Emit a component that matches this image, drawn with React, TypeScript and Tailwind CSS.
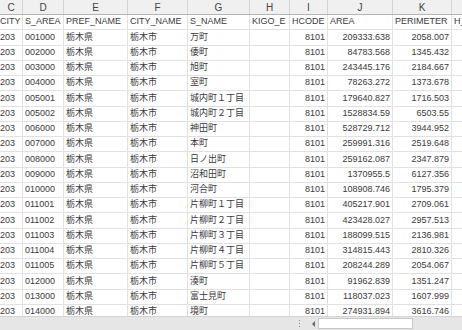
import React from "react";

const letters = ["C", "D", "E", "F", "G", "H", "I", "J", "K", ""];
const fields = ["CITY", "S_AREA", "PREF_NAME", "CITY_NAME", "S_NAME", "KIGO_E", "HCODE", "AREA", "PERIMETER", "H_ID"];

const rows: [string, string, string, string][] = [
  ["001000", "万町", "209333.638", "2058.007"],
  ["002000", "倭町", "84783.568", "1345.432"],
  ["003000", "旭町", "243445.176", "2184.667"],
  ["004000", "室町", "78263.272", "1373.678"],
  ["005001", "城内町１丁目", "179640.827", "1716.503"],
  ["005002", "城内町２丁目", "1528834.59", "6503.55"],
  ["006000", "神田町", "528729.712", "3944.952"],
  ["007000", "本町", "259991.316", "2519.648"],
  ["008000", "日ノ出町", "259162.087", "2347.879"],
  ["009000", "沼和田町", "1370955.5", "6127.356"],
  ["010000", "河合町", "108908.746", "1795.379"],
  ["011001", "片柳町１丁目", "405217.901", "2709.061"],
  ["011002", "片柳町２丁目", "423428.027", "2957.513"],
  ["011003", "片柳町３丁目", "188099.515", "2136.981"],
  ["011004", "片柳町４丁目", "314815.443", "2810.326"],
  ["011005", "片柳町５丁目", "208244.289", "2054.067"],
  ["012000", "湊町", "91962.839", "1351.247"],
  ["013000", "富士見町", "118037.023", "1607.999"],
  ["014000", "境町", "274931.894", "3616.746"],
];

const cols = "grid grid-cols-[23px_41px_64px_60px_62px_40px_38px_65px_59px_40px]";
const cell = "h-[15.25px] border-r border-b border-[#e1e1e1] px-[2px] flex items-center overflow-hidden whitespace-nowrap";
const num = cell + " justify-end";

export default function App() {
  return (
    <div
      className="w-[462px] h-[330px] overflow-hidden flex flex-col bg-white text-[#3a3a3a] text-[9px]"
      style={{ fontFamily: '"Liberation Sans", "Noto Sans CJK JP", sans-serif' }}
    >
      <div className="flex-1 overflow-hidden">
        <div className={cols + " w-[492px] bg-[#f0f0f0] border-b border-[#b5b5b5]"}>
          {letters.map((l, i) => (
            <div
              key={i}
              className="h-[14px] border-r border-[#d4d4d4] flex items-center justify-center text-[10px] text-[#444]"
            >
              {l}
            </div>
          ))}
        </div>
        <div className={cols + " w-[492px]"}>
          {fields.map((f, i) => (
            <div key={f} className={cell + (i === 0 ? " pl-0" : "")}>
              {f}
            </div>
          ))}
          {rows.map((r) => (
            <React.Fragment key={r[0]}>
              <div className={cell + " pl-0"}>203</div>
              <div className={cell}>{r[0]}</div>
              <div className={cell}>栃木県</div>
              <div className={cell}>栃木市</div>
              <div className={cell}>{r[1]}</div>
              <div className={cell}></div>
              <div className={num}>8101</div>
              <div className={num}>{r[2]}</div>
              <div className={num}>{r[3]}</div>
              <div className={cell}></div>
            </React.Fragment>
          ))}
        </div>
      </div>
      <div className="h-[14px] shrink-0 bg-[#e6e6e6] border-t border-[#d4d4d4] flex items-center">
        <div className="w-[298px]" />
        <div className="w-[3px] flex flex-col gap-[2px] items-center">
          <span className="w-[1px] h-[1px] bg-[#888]" />
          <span className="w-[1px] h-[1px] bg-[#888]" />
          <span className="w-[1px] h-[1px] bg-[#888]" />
        </div>
        <div className="w-[8px]" />
        <div className="w-[9px] h-[11px] flex items-center justify-center">
          <span className="w-0 h-0 border-y-[3px] border-y-transparent border-r-[3px] border-r-[#666]" />
        </div>
        <div className="w-[95px] h-[11px] bg-white border border-[#c8c8c8]" />
      </div>
    </div>
  );
}
